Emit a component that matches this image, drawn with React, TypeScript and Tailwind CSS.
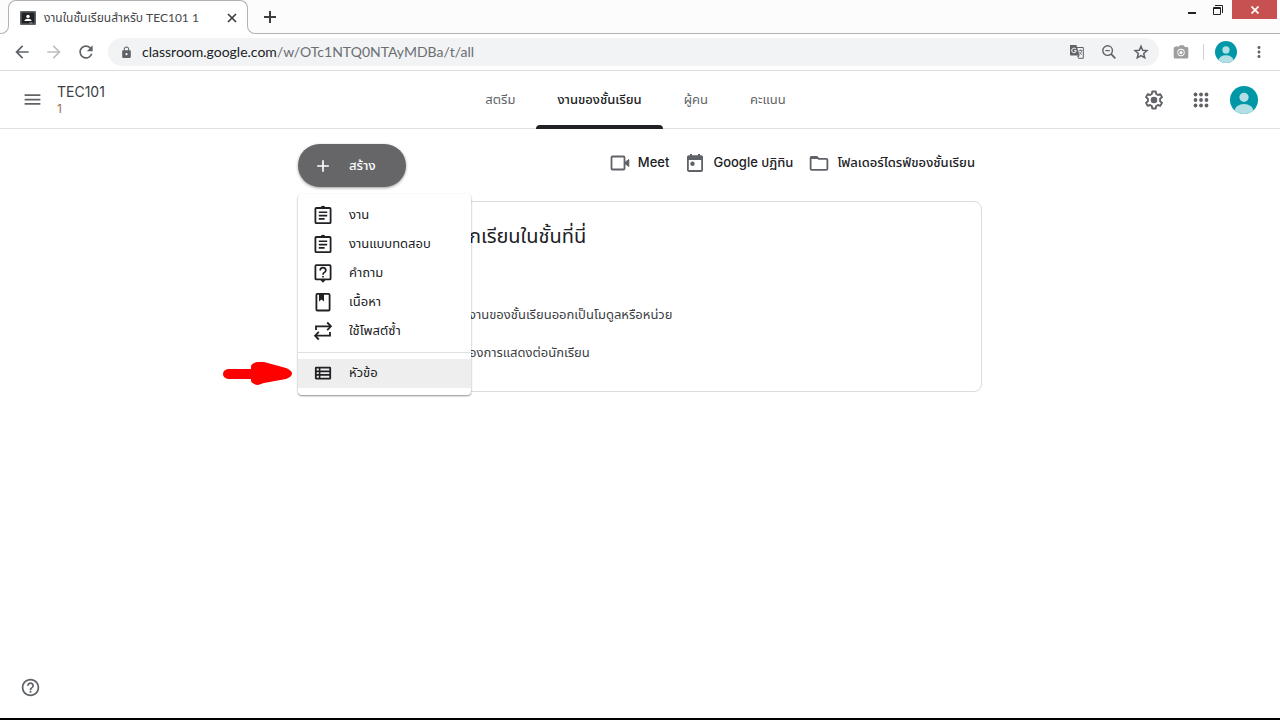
import React from 'react';
import {
  MdArrowBack,
  MdArrowForward,
  MdAdd,
  MdHelpOutline,
  MdLock,
  MdMenu,
  MdMoreVert,
  MdRefresh,
} from 'react-icons/md';

const NAV_TABS = [
  { label: 'สตรีม', active: false },
  { label: 'งานของชั้นเรียน', active: true },
  { label: 'ผู้คน', active: false },
  { label: 'คะแนน', active: false },
];

const Avatar: React.FC<{ className: string }> = ({ className }) => (
  <svg viewBox="0 0 28 28" className={className} aria-hidden="true">
    <defs>
      <clipPath id="avatar-clip">
        <circle cx="14" cy="14" r="14" />
      </clipPath>
    </defs>
    <g clipPath="url(#avatar-clip)">
      <rect width="28" height="28" fill="#0097a7" />
      <circle cx="14" cy="11.3" r="4.6" fill="#b2dfe4" />
      <ellipse cx="14" cy="24.4" rx="9.4" ry="6.3" fill="#b2dfe4" />
    </g>
  </svg>
);

const ClassroomIcon = () => (
  <svg width="16" height="14" viewBox="0 0 16 14" className="shrink-0" aria-hidden="true">
    <rect width="16" height="14" rx="1" fill="#5f6368" />
    <rect x="1.6" y="1.6" width="12.8" height="10.8" fill="#202124" />
    <circle cx="8" cy="5.4" r="1.7" fill="#fff" />
    <path d="M4.4 10c0-1.6 2-2.3 3.6-2.3s3.6.7 3.6 2.3z" fill="#fff" />
    <rect x="9.5" y="11.4" width="3" height="1" fill="#9aa0a6" />
  </svg>
);

const TranslateIcon = () => (
  <svg width="16" height="16" viewBox="0 0 16 16" aria-hidden="true">
    <path d="M7 3.5h7.3v10.8H9.2" fill="none" stroke="#5f6368" strokeWidth="1" />
    <path d="M1 1h6.4l3.2 10.5H1.8Q1 11.5 1 10.7z" fill="#5f6368" />
    <path d="M8 11.5h2.6L9 14.3z" fill="#5f6368" />
    <path d="M6.9 5.1A2.3 2.3 0 1 0 7.3 6.7H5.2" fill="none" stroke="#fff" strokeWidth="1" />
    <path
      d="M9.6 6.6h3.8M11.4 5.4v1.2M12.8 6.6c-.3 1.8-1.3 3-2.3 3.8M10.4 8c.6 1.3 1.5 2 2.6 2.8"
      fill="none"
      stroke="#5f6368"
      strokeWidth=".8"
    />
  </svg>
);

const ZoomOutIcon = () => (
  <svg width="16" height="16" viewBox="0 0 16 16" fill="none" stroke="#5f6368" strokeWidth="1.4" aria-hidden="true">
    <circle cx="6.6" cy="6.6" r="4.8" />
    <path d="M10.2 10.2 14.3 14.3" strokeWidth="1.8" />
    <path d="M4.4 6.6h4.4" strokeWidth="1.2" />
  </svg>
);

const StarIcon = () => (
  <svg width="16" height="16" viewBox="0 0 16 16" fill="none" stroke="#5f6368" strokeWidth="1.5" aria-hidden="true">
    <path d="M8 2.2 9.7 6.2 14 6.6 10.7 9.5 11.7 13.7 8 11.5 4.3 13.7 5.3 9.5 2 6.6 6.3 6.2z" />
  </svg>
);

const CameraIcon = () => (
  <svg width="16" height="14" viewBox="0 0 16 14" aria-hidden="true">
    <path
      d="M2.5 1.2h2.2V2h.8L6.6.3h4.2L11.9 2H14q1.3 0 1.3 1.3v9q0 1.2-1.3 1.2H2q-1.3 0-1.3-1.2v-9Q.7 2 2 2h.5z"
      fill="#9e9e9e"
    />
    <circle cx="8" cy="7.5" r="3.7" fill="#fff" />
    <circle cx="8" cy="7.5" r="2.8" fill="#9e9e9e" />
    <circle cx="8" cy="7.5" r="1.5" fill="#fff" />
  </svg>
);

const SettingsIcon = () => (
  <svg width="20" height="20" viewBox="0 0 20 20" aria-hidden="true">
    <path
      fill="none"
      stroke="#5f6368"
      strokeWidth="1.9"
      strokeLinejoin="round"
      d="M8.3 1.5h3.4l.5 2.5 1.7 1 2.4-.9 1.7 3-1.9 1.7v2.4l1.9 1.7-1.7 3-2.4-.9-1.7 1-.5 2.5H8.3l-.5-2.5-1.7-1-2.4.9-1.7-3 1.9-1.7V8.8L2 7.1l1.7-3 2.4.9 1.7-1z"
    />
    <circle cx="10" cy="10" r="3.3" fill="#5f6368" />
  </svg>
);

const AppsIcon = () => (
  <svg width="16" height="16" viewBox="0 0 16 16" fill="#5f6368" aria-hidden="true">
    {[2.5, 8, 13.5].map((y) => [2.5, 8, 13.5].map((x) => <circle key={`${x}-${y}`} cx={x} cy={y} r="1.9" />))}
  </svg>
);

const Icon20: React.FC<{ children: React.ReactNode }> = ({ children }) => (
  <svg
    width="20"
    height="20"
    viewBox="0 0 20 20"
    fill="none"
    stroke="currentColor"
    strokeWidth="1.8"
    className="shrink-0"
    aria-hidden="true"
  >
    {children}
  </svg>
);

const MeetIcon = () => (
  <Icon20>
    <rect x="1.5" y="3.5" width="13" height="13" rx="1" />
    <path d="M14.8 9.6 18.8 6.5v7L14.8 10.4z" fill="currentColor" strokeWidth="1" />
  </Icon20>
);

const CalendarIcon = () => (
  <Icon20>
    <rect x="2.9" y="3.2" width="14.2" height="14.8" rx="1" />
    <path d="M2.5 3h15v4h-15zM5 1h2v2.5H5zM13 1h2v2.5h-2z" fill="currentColor" stroke="none" />
    <circle cx="7.5" cy="10.8" r="2.2" fill="currentColor" stroke="none" />
  </Icon20>
);

const FolderIcon = () => (
  <Icon20>
    <path d="M2.6 3.9h5.2l1.9 1.9h7.7q1 0 1 1v9q0 1-1 1H2.6q-1 0-1-1V4.9q0-1 1-1z" />
    <path d="M1.6 3.5h6.2l2 2.6H1.6z" fill="currentColor" stroke="none" />
  </Icon20>
);

const AssignmentIcon = () => (
  <Icon20>
    <rect x="2.4" y="3" width="15.2" height="15.2" rx="1" />
    <path d="M7.5 3q.3-2.2 2.5-2.2T12.500 3z" fill="currentColor" stroke="none" />
    <path d="M5.8 7.3h8.4M5.8 10.6h8.4M5.8 13.9h5.8" strokeWidth="1.6" />
  </Icon20>
);

const QuestionIcon = () => (
  <Icon20>
    <path d="M3.4 2.2h13.2q1 0 1 1v12.2q0 1-1 1H3.4q-1 0-1-1V3.2q0-1 1-1z" />
    <path d="M7 16.5h6L10 19.8z" fill="currentColor" stroke="none" />
    <path d="M7.2 7.4Q7.200 4.700 10 4.700t2.800 2.700Q12.800 8.500 11.400 9.400 10 10.300 10 11.700" strokeWidth="1.7" />
    <path d="M10 12.900v1.700" strokeWidth="1.700" />
  </Icon20>
);

const MaterialIcon = () => (
  <Icon20>
    <rect x="3.4" y="1.9" width="13.2" height="16.6" rx="1" />
    <path d="M6 2h5v7.4L8.5 7.5 6 9.4z" fill="currentColor" stroke="none" />
  </Icon20>
);

const ReuseIcon = () => (
  <Icon20>
    <path d="M3 9V5.300h14M17 11v3.700H3" />
    <path d="M14.200 1.500 17.900 5.300 14.200 9.100M5.800 10.900 2.100 14.700 5.800 18.500" />
  </Icon20>
);

const TopicIcon = () => (
  <Icon20>
    <rect x="2.800" y="4.600" width="14.400" height="11" rx=".4" />
    <path d="M2.800 8.300h14.400M2.800 11.900h14.400" strokeWidth="1.700" />
    <path d="M6.600 4.600v11" strokeWidth="1.600" />
  </Icon20>
);

const MENU_ITEMS = [
  { label: 'งาน', Icon: AssignmentIcon },
  { label: 'งานแบบทดสอบ', Icon: AssignmentIcon },
  { label: 'คำถาม', Icon: QuestionIcon },
  { label: 'เนื้อหา', Icon: MaterialIcon },
  { label: 'ใช้โพสต์ซ้ำ', Icon: ReuseIcon },
];

const CLASS_LINKS = [
  { label: 'Meet', Icon: MeetIcon },
  { label: 'Google ปฏิทิน', Icon: CalendarIcon },
  { label: 'โฟลเดอร์ไดรฟ์ของชั้นเรียน', Icon: FolderIcon },
];

const RedArrow = () => (
  <svg
    width="70"
    height="26"
    viewBox="0 0 70 26"
    className="absolute right-full top-[167px] mr-[6px]"
    aria-hidden="true"
  >
    <path
      fill="#f00"
      d="M6 8H29V5Q30 2 35 1L42 1 64 7Q70 9.5 70 12.5T64 18L42 22 36 24Q30 23 29 20V18H6Q1 17 1 13T6 8z"
    />
  </svg>
);

const BrowserTabs = () => (
  <div className="flex h-[34px] bg-[#fcfcfc]">
    <div className="relative z-10 -mr-px h-2 w-[9px] self-end bg-white">
      <div className="h-full rounded-br-lg border-b border-r border-[#b3b1b3] bg-[#fcfcfc]" />
    </div>
    <div className="flex w-60 items-center gap-2 rounded-t-lg border-x border-t border-[#b3b1b3] bg-white pl-[11px] pr-2">
      <ClassroomIcon />
      <span className="flex-1 whitespace-nowrap font-[family-name:Lato,'Noto_Sans_Thai',sans-serif] text-xs text-[#45474a]">
        งานในชั้นเรียนสำหรับ TEC101 1
      </span>
      <button aria-label="ปิดแท็บ" className="text-[#3c4043]">
        <svg width="14" height="14" viewBox="0 0 14 14" stroke="currentColor" strokeWidth="1.7" aria-hidden="true">
          <path d="M3 3l8 8M11 3l-8 8" />
        </svg>
      </button>
    </div>
    <div className="relative z-10 -ml-px h-2 w-[9px] self-end bg-white">
      <div className="h-full rounded-bl-lg border-b border-l border-[#b3b1b3] bg-[#fcfcfc]" />
    </div>
    <div className="flex flex-1 items-start justify-between border-b border-[#b3b1b3] pl-1 pr-[3px]">
      <button aria-label="แท็บใหม่" className="mt-[7px] text-[#3c4043]">
        <svg width="20" height="20" viewBox="0 0 20 20" stroke="currentColor" strokeWidth="2" aria-hidden="true">
          <path d="M10 4v12M4 10h12" />
        </svg>
      </button>
      <div className="flex">
        <button aria-label="ย่อ" className="flex h-[19px] w-[26px] items-center justify-center">
          <svg width="8" height="12" viewBox="0 0 8 12" aria-hidden="true">
            <path d="M0 8h8v2H0z" fill="#202124" />
          </svg>
        </button>
        <button aria-label="คืนค่า" className="flex h-[19px] w-[26px] items-center justify-center">
          <svg width="10" height="10" viewBox="0 0 10 10" fill="none" stroke="#202124" aria-hidden="true">
            <path d="M2 .5h7.5V8" />
            <path d="M.5 2.5h7v7h-7zM.5 3.5h7" />
          </svg>
        </button>
        <button aria-label="ปิด" className="ml-px flex h-[19px] w-[45px] items-center justify-center bg-[#c75050]">
          <svg width="8" height="8" viewBox="0 0 8 8" stroke="#fff" strokeWidth="1.7" aria-hidden="true">
            <path d="M.5.5l7 7M7.5.5l-7 7" />
          </svg>
        </button>
      </div>
    </div>
  </div>
);

const AddressBar = () => (
  <div className="flex items-center border-b border-[#dadce0] px-3 py-1">
    <div className="flex w-24 gap-3 text-[#5f6368]">
      <button aria-label="ย้อนกลับ">
        <MdArrowBack size={20} />
      </button>
      <button aria-label="ไปข้างหน้า" className="text-[#bdbfc1]">
        <MdArrowForward size={20} />
      </button>
      <button aria-label="โหลดซ้ำ">
        <MdRefresh size={20} />
      </button>
    </div>
    <div className="flex h-7 flex-1 items-center rounded-full bg-[#f1f3f4] pl-3 pr-[10px]">
      <MdLock size={13} className="shrink-0 text-[#5f6368]" />
      <p className="ml-[9px] flex-1 font-[family-name:Lato,sans-serif] text-sm text-[#6b6e72]">
        <span className="text-[#202124]">classroom.google.com</span>/w/OTc1NTQ0NTAyMDBa/t/all
      </p>
      <div className="flex items-center gap-4">
        <button aria-label="แปลหน้านี้">
          <TranslateIcon />
        </button>
        <button aria-label="ซูม">
          <ZoomOutIcon />
        </button>
        <button aria-label="บุ๊กมาร์ก">
          <StarIcon />
        </button>
      </div>
    </div>
    <button aria-label="กล้อง" className="ml-[14px]">
      <CameraIcon />
    </button>
    <div className="ml-[14px] h-4 w-px bg-[#cfd1d4]" />
    <button aria-label="โปรไฟล์" className="ml-[11px]">
      <Avatar className="size-[22px]" />
    </button>
    <button aria-label="เมนู" className="ml-[13px] text-[#5f6368]">
      <MdMoreVert size={18} />
    </button>
  </div>
);

const ClassHeader = () => (
  <header className="grid grid-cols-[1fr_auto_1fr] border-b border-[#e0e0e0] px-[22px]">
    <div className="flex items-center gap-[14px]">
      <button aria-label="เมนูหลัก" className="text-[#5f6368]">
        <MdMenu size={21} />
      </button>
      <div>
        <h1 className="text-sm leading-[18px] text-[#3c4043]">TEC101</h1>
        <p className="text-xs leading-4 text-[#9a6f4e]">1</p>
      </div>
    </div>
    <nav className="mr-[9px] flex text-[13px]">
      {NAV_TABS.map((tab) => (
        <a
          key={tab.label}
          href="#"
          className={`relative flex h-[57px] items-center px-[21px] ${
            tab.active ? 'font-medium text-[#202124]' : 'text-[#5f6368]'
          }`}
        >
          {tab.label}
          {tab.active && <span className="absolute inset-x-0 -bottom-px h-1 rounded-t-sm bg-[#202124]" />}
        </a>
      ))}
    </nav>
    <div className="flex items-center justify-end text-[#5f6368]">
      <button aria-label="การตั้งค่า">
        <SettingsIcon />
      </button>
      <button aria-label="แอป Google" className="ml-[29px]">
        <AppsIcon />
      </button>
      <button aria-label="บัญชี" className="ml-[21px]">
        <Avatar className="size-7" />
      </button>
    </div>
  </header>
);

const CreateMenu = () => (
  <div className="absolute left-0 top-full z-10 mt-[7px] w-[173px] rounded bg-white py-[7px] text-[13px] text-[#202124] shadow-[0_1px_2px_rgba(0,0,0,0.45)]">
    {MENU_ITEMS.map(({ label, Icon }) => (
      <button key={label} className="flex h-[29px] w-full items-center gap-4 px-[15px] pb-[2px]">
        <Icon />
        {label}
      </button>
    ))}
    <div className="my-[6px] border-t border-[#e0e0e0]" />
    <button className="flex h-[29px] w-full items-center gap-4 bg-[#eeeeee] px-[15px] pb-[2px]">
      <TopicIcon />
      หัวข้อ
    </button>
    <RedArrow />
  </div>
);

const App: React.FC = () => (
  <div className="flex min-h-screen flex-col border-b-2 border-black bg-white font-[family-name:Inter,'Noto_Sans_Thai',sans-serif]">
    <BrowserTabs />
    <AddressBar />
    <ClassHeader />
    <main className="mx-auto w-full max-w-[684px] flex-1 pt-[15px]">
      <div className="flex items-start justify-between">
        <div className="relative">
          <button className="flex h-[43px] items-center gap-4 rounded-full bg-[#666668] pl-[15px] pr-[30px] text-[13px] font-medium text-white shadow-[0_1px_3px_rgba(0,0,0,0.4)]">
            <MdAdd size={20} />
            สร้าง
          </button>
          <CreateMenu />
        </div>
        <div className="mr-[7px] flex h-[38px] items-center gap-4 text-[13px] font-medium">
          {CLASS_LINKS.map(({ label, Icon }) => (
            <a key={label} href="#" className="flex items-center gap-2 text-[#5f6368]">
              <Icon />
              <span className="text-[#202124]">{label}</span>
            </a>
          ))}
        </div>
      </div>
      <section className="mt-[14px] rounded-lg border border-[#dadce0] pb-[29px] pl-[170px] pr-4 pt-5 text-[#3c4043]">
        <h2 className="text-xl leading-7 text-[#202124]">กเรียนในชั้นที่นี่</h2>
        <p className="mt-[54px] text-[13px] leading-5">งานของชั้นเรียนออกเป็นโมดูลหรือหน่วย</p>
        <p className="mt-[18px] text-[13px] leading-5">องการแสดงต่อนักเรียน</p>
      </section>
    </main>
    <footer className="px-5 pb-5">
      <button aria-label="ความช่วยเหลือ" className="block text-[#5f6368]">
        <MdHelpOutline size={21} />
      </button>
    </footer>
  </div>
);

export default App;
